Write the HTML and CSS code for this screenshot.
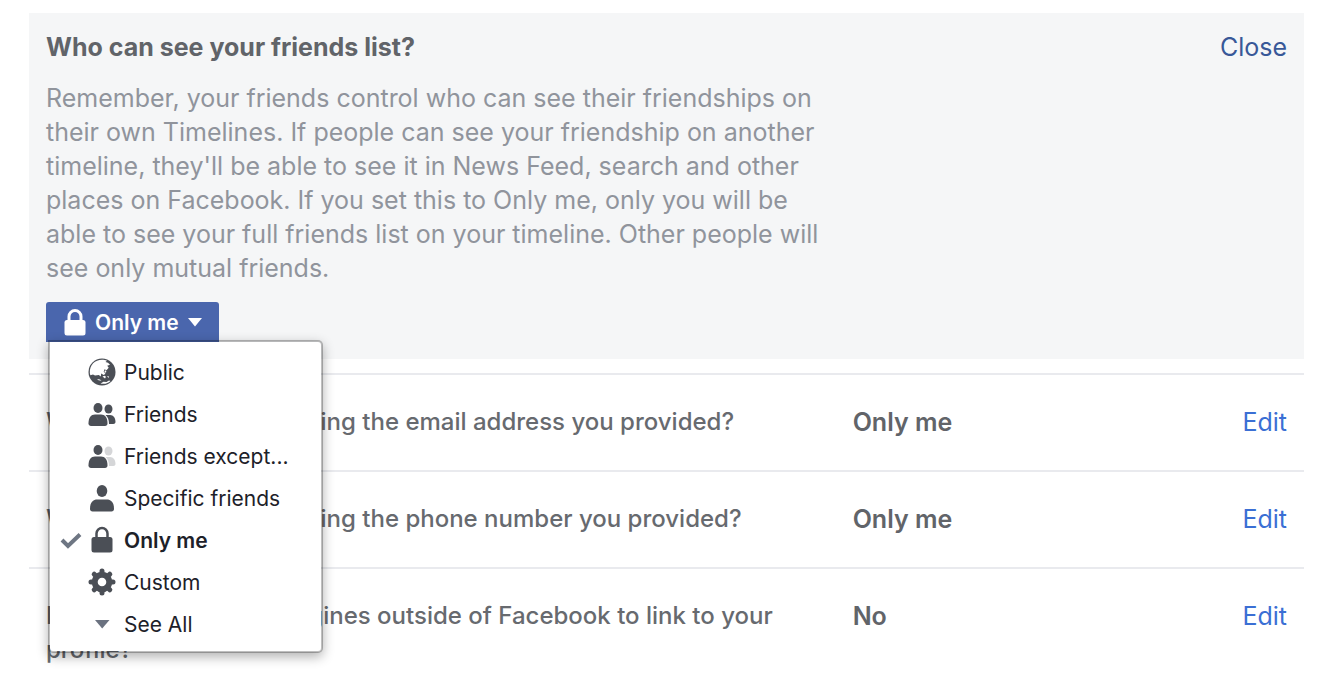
FILE: index.html
```html
<!DOCTYPE html>
<html lang="en">
<head>
    <meta charset="UTF-8">
    <meta name="viewport" content="width=device-width, initial-scale=1.0">
    <title>Privacy settings</title>
    <link rel="stylesheet" href="styles.css">
</head>
<body>
    <main class="settings">
        <section class="panel">
            <div class="panel-head">
                <h1>Who can see your friends list?</h1>
                <a class="close" href="#">Close</a>
            </div>
            <p class="info">Remember, your friends control who can see their friendships on their own Timelines. If people can see your friendship on another timeline, they'll be able to see it in News Feed, search and other places on Facebook. If you set this to Only me, only you will be able to see your full friends list on your timeline. Other people will see only mutual friends.</p>
            <div class="dropdown">
                <button class="selector" type="button" aria-haspopup="true" aria-expanded="true">
                    <svg width="22" height="27" viewBox="0 0 22 27"><path d="M5 12V7.500a6 6 0 0 1 12 0V12" fill="none" stroke="#fff" stroke-width="3"/><rect x="0.500" y="11" width="21" height="15.500" rx="2.500" fill="#fff"/></svg>
                    <span>Only me</span>
                    <svg width="14" height="9" viewBox="0 0 14 9"><path d="M0 0h14L7 8.500z" fill="#fff"/></svg>
                </button>
                <ul class="menu" role="menu">
                    <li><button type="button" role="menuitemradio">
                        <span class="check"></span>
                        <svg class="icon" viewBox="0 0 28 28"><circle cx="14" cy="14" r="13.500" fill="#4b4f56"/><path d="M1.800 15C1.500 7 7 1.800 14 1.800c1.500 0 3.500.4 5 1L17.500 4l2.500.8 2 2-2.800 1 1.500 2-2.200 2.400-2-1-.8 2.600 1.800 2-1.800 1.200-2.500-1.500-.4 3-2-1.500-3.800.6-2-1.200-2.700.8z" fill="#fff"/><path d="M16.500 13l1.500-.7.3 1.700-1.500 1zM14.500 18.500l2-.8 1.500 1-1 1.700zM19 18l2 .5-.5 1.500zM12.500 25.500l3-1.800 3 .3 2.500-1.500 1.500.5c-2.500 2.500-6 3.400-10 2.500zM9 21l3 .5 1.500 1.200-3-.4z" fill="#fff"/></svg>
                        <span>Public</span>
                    </button></li>
                    <li><button type="button" role="menuitemradio">
                        <span class="check"></span>
                        <svg class="icon" viewBox="0 0 28 28"><g fill="#4b4f56"><ellipse cx="10" cy="8" rx="4.500" ry="5"/><path d="M.5 23.500C.5 17.500 3 14.500 7 14.500h6c4 0 6.500 3 6.500 9 0 1.500-1 2.500-2.500 2.500H3C1.500 26 .5 25 .5 23.500z"/><ellipse cx="20.500" cy="9" rx="4" ry="4.500"/><path d="M17.500 15H22c3.500 0 5.500 3 5.500 7 0 1.300-1 2-2.200 2H21c0-4-1-7-3.500-9z"/></g></svg>
                        <span>Friends</span>
                    </button></li>
                    <li><button type="button" role="menuitemradio">
                        <span class="check"></span>
                        <svg class="icon" viewBox="0 0 28 28"><g fill="#4b4f56"><ellipse cx="10" cy="8" rx="4.500" ry="5"/><path d="M.5 23.500C.5 17.500 3 14.500 7 14.500h6c4 0 6.500 3 6.500 9 0 1.500-1 2.500-2.500 2.500H3C1.500 26 .5 25 .5 23.500z"/></g><g fill="#d5d6d8"><ellipse cx="20.500" cy="9" rx="4" ry="4.500"/><path d="M17.500 15H22c3.500 0 5.500 3 5.500 7 0 1.300-1 2-2.200 2H21c0-4-1-7-3.500-9z"/></g></svg>
                        <span>Friends except...</span>
                    </button></li>
                    <li><button type="button" role="menuitemradio">
                        <span class="check"></span>
                        <svg class="icon" viewBox="0 0 28 28"><g fill="#4b4f56"><ellipse cx="14" cy="7" rx="5.300" ry="6"/><path d="M2 25c0-7 3-9.500 7.500-9.500h9c4.500 0 7.500 2.500 7.500 9.500 0 1.500-1 2.500-2.500 2.500h-19C3 27.500 2 26.500 2 25z"/></g></svg>
                        <span>Specific friends</span>
                    </button></li>
                    <li><button class="selected" type="button" role="menuitemradio" aria-checked="true">
                        <span class="check"><svg width="22" height="17" viewBox="0 0 22 17"><path d="M2 8l6 6L20 2.500" fill="none" stroke="#6e7683" stroke-width="4"/></svg></span>
                        <svg class="icon" viewBox="0 0 28 28"><path d="M8.500 13V7.500a5.500 5.500 0 0 1 11 0V13" fill="none" stroke="#4b4f56" stroke-width="2.500"/><rect x="3.500" y="11" width="21" height="15.500" rx="2.500" fill="#4b4f56"/></svg>
                        <span>Only me</span>
                    </button></li>
                    <li><button type="button" role="menuitemradio">
                        <span class="check"></span>
                        <svg class="icon" viewBox="0 0 28 28"><circle cx="14" cy="14" r="7.300" fill="none" stroke="#4b4f56" stroke-width="6"/><path d="M14 5V3M14 23v2M5 14H3M23 14h2M7.500 7.500L6.200 6.200M20.500 20.500l1.300 1.300M7.500 20.500l-1.300 1.300M20.500 7.500l1.300-1.300" stroke="#4b4f56" stroke-width="5" stroke-linecap="round"/></svg>
                        <span>Custom</span>
                    </button></li>
                    <li><button type="button" role="menuitem">
                        <span class="check"></span>
                        <svg class="icon" viewBox="0 0 28 28"><path d="M7 10h14.500L14.200 18.500z" fill="#6b7280"/></svg>
                        <span>See All</span>
                    </button></li>
                </ul>
            </div>
        </section>

        <ul class="rows">
            <li class="row">
                <span>Who can look you up using the email address you provided?</span>
                <strong>Only me</strong>
                <a href="#">Edit</a>
            </li>
            <li class="row">
                <span>Who can look you up using the phone number you provided?</span>
                <strong>Only me</strong>
                <a href="#">Edit</a>
            </li>
            <li class="row">
                <span>Do you want search engines outside of Facebook to link to your profile?</span>
                <strong>No</strong>
                <a href="#">Edit</a>
            </li>
        </ul>
    </main>
</body>
</html>
```
FILE: styles.css
```css
*{
    box-sizing: border-box;
}
body{
    margin: 0;
    background: #fff;
    color: #616469;
    font-family: Inter, "Liberation Sans", sans-serif;
    font-size: 25px;
    line-height: 34px;
}
h1, p, ul{
    margin: 0;
    padding: 0;
}
ul{
    list-style: none;
}
a{
    color: #3b6fd4;
    text-decoration: none;
}
.settings{
    padding: 13px 16px 0 29px;
}
.panel{
    padding: 17px;
    background: #f5f6f7;
}
.panel-head{
    display: flex;
    justify-content: space-between;
}
h1{
    font-size: 25px;
    font-weight: 700;
}
.close{
    color: #385898;
}
.info{
    max-width: 790px;
    margin: 17px 0;
    color: #90949c;
}

/* audience selector */
.dropdown{
    position: relative;
}
.selector{
    display: flex;
    align-items: center;
    gap: 9px;
    height: 40px;
    padding: 0 17px 0 18px;
    border: 0;
    border-radius: 3px 3px 0 0;
    background: #4a66ad;
    color: #fff;
    font-family: inherit;
    font-size: 21px;
    font-weight: 600;
}
.menu{
    position: absolute;
    top: 38px;
    left: 2px;
    z-index: 1;
    width: 275px;
    padding: 9px 0 6px;
    border: 2px solid rgba(0, 0, 0, 0.25);
    border-radius: 0 5px 5px 5px;
    background: #fff;
    background-clip: padding-box;
    box-shadow: 0 4px 12px rgba(0, 0, 0, 0.3);
}
.menu button{
    display: flex;
    align-items: center;
    width: 100%;
    height: 42px;
    padding: 0 10px;
    border: 0;
    background: none;
    color: #1d2129;
    font-family: inherit;
    font-size: 21px;
}
.menu .selected{
    font-weight: 600;
}
.check{
    display: flex;
    width: 28px;
}
.icon{
    width: 28px;
    height: 28px;
    margin-right: 8px;
}

.rows{
    margin-top: 14px;
}
.row{
    display: grid;
    grid-template-columns: 65% 1fr auto;
    padding: 30px 17px 31px;
    border-top: 2px solid #e9eaee;
}
.row span{
    padding-right: 30px;
    color: #676a6f;
    font-size: 24px;
    font-weight: 500;
}
.row strong{
    font-weight: 600;
}
```
